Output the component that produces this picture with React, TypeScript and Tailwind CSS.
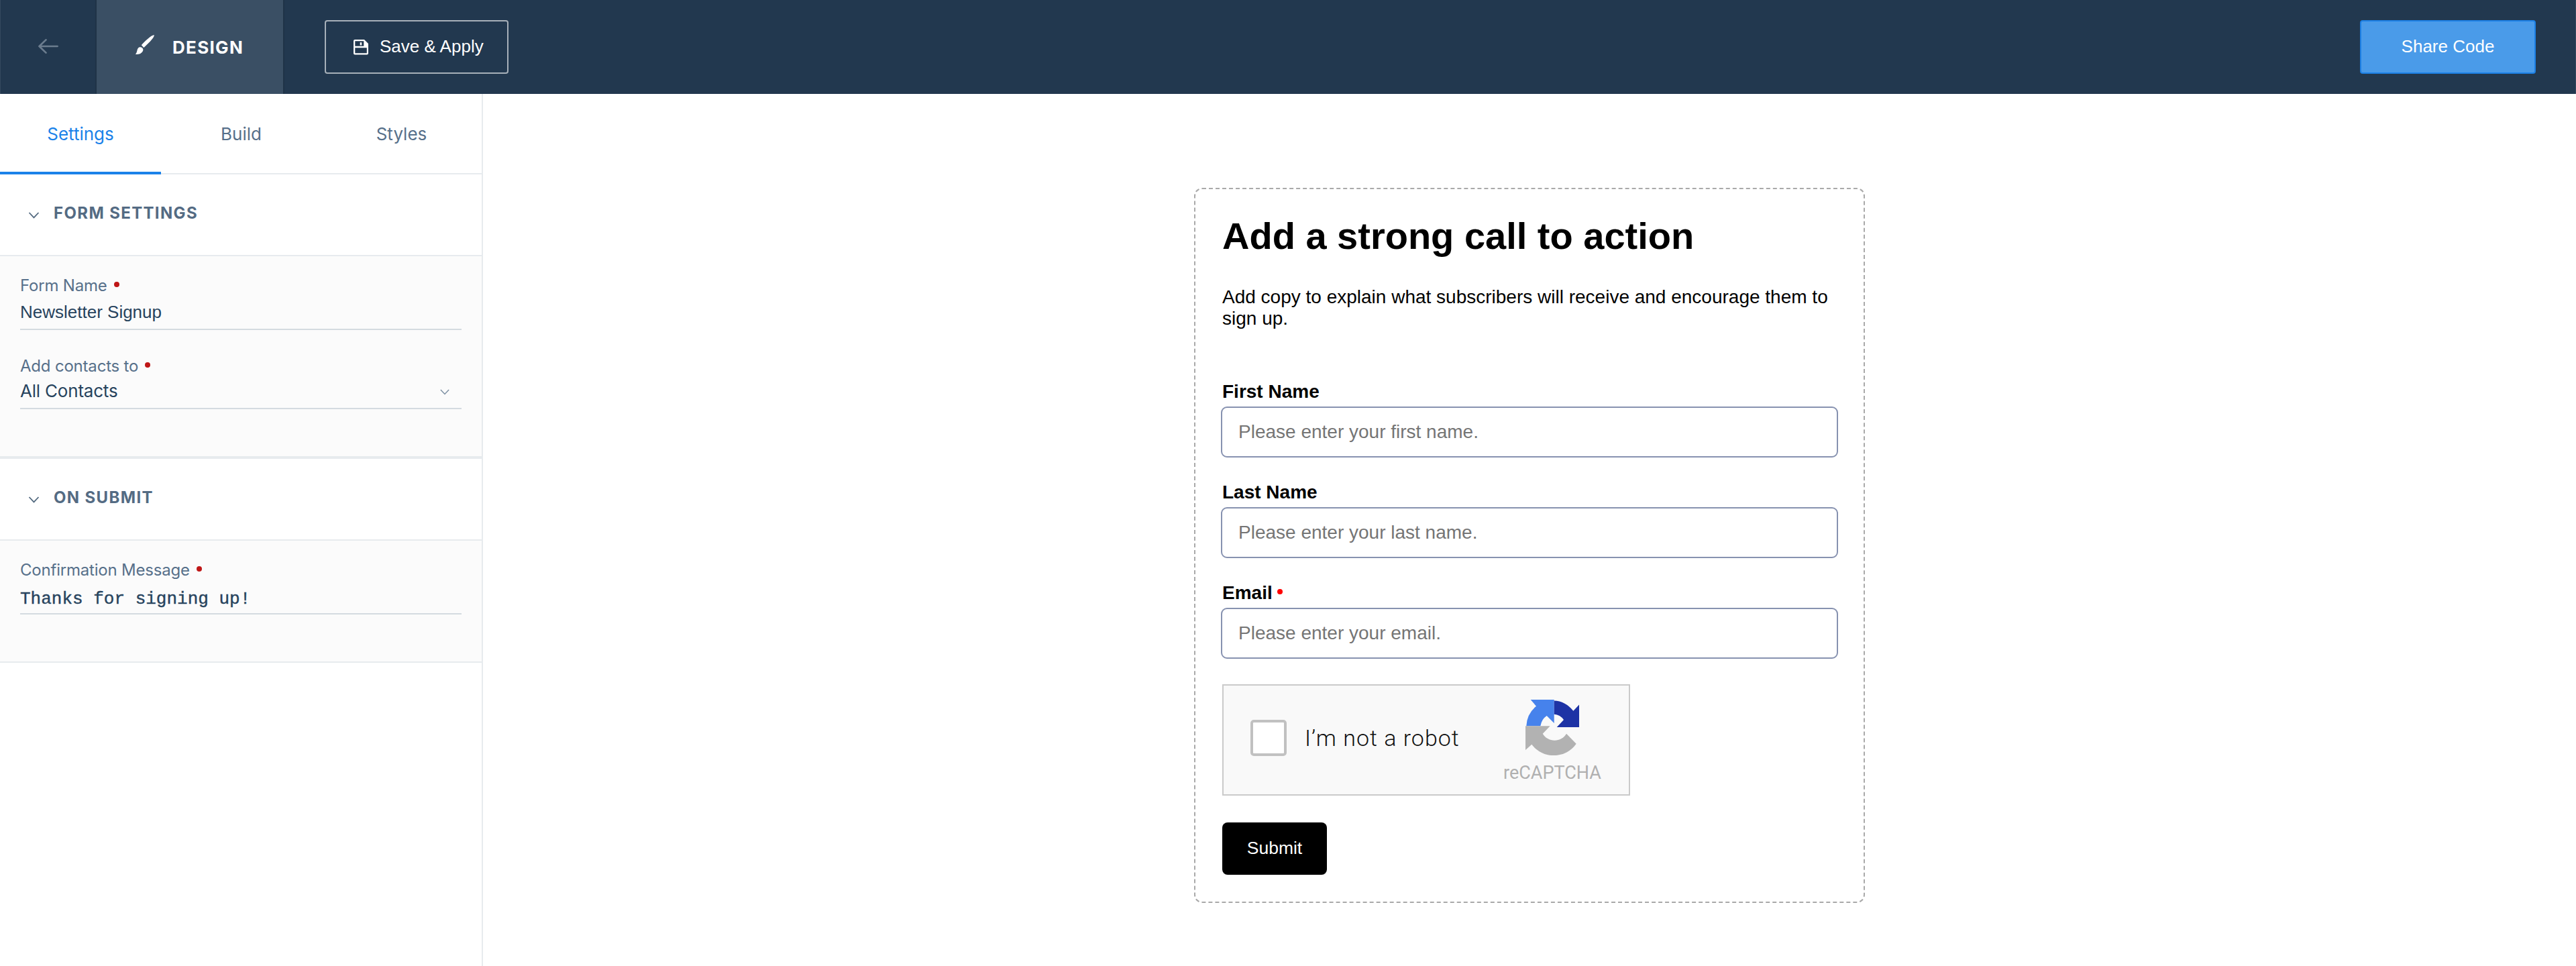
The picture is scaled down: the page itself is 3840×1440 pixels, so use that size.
import React from "react";

const helv = "font-['Liberation_Sans',Arial,sans-serif]";

function Chevron({ className, color }: { className: string; color: string }) {
  return (
    <svg viewBox="0 0 16 10" className={className} fill="none" stroke={color} strokeWidth="1.8">
      <path d="M1 1l7 7.4L15 1" />
    </svg>
  );
}

function FieldLabel({ children }: { children: string }) {
  return (
    <div className="flex items-center gap-[10px] text-[24px] leading-[28px] tracking-[-0.2px] whitespace-nowrap text-[#57708a]">
      <span>{children}</span>
      <span className="mb-[5px] size-[8px] rounded-full bg-[#bf1717]" />
    </div>
  );
}

function SectionHeader({ children }: { children: string }) {
  return (
    <div className="flex h-[122px] border-b-2 border-[#e7ebee] bg-white pl-[42px]">
      <Chevron className="mt-[56px] h-[10px] w-[17px]" color="#52697f" />
      <h2 className="mt-[42px] ml-[21px] text-[24px] leading-[32px] font-bold tracking-[1.35px] whitespace-nowrap text-[#546b83]">
        {children}
      </h2>
    </div>
  );
}

function FormField({ label, placeholder, required }: { label: string; placeholder: string; required?: boolean }) {
  return (
    <div className="h-[150px]">
      <div className="flex h-[38px] items-start pl-[2px] text-[28px] leading-[32px] font-bold whitespace-nowrap text-black">
        <span>{label}</span>
        {required && <span className="mt-[10px] ml-[7px] size-[8px] rounded-full bg-[#ff0000]" />}
      </div>
      <div className="flex h-[76px] w-[920px] items-center rounded-[9px] border-2 border-[#8792b0] pl-[24px] text-[28px] text-[#757575]">
        {placeholder}
      </div>
    </div>
  );
}

export default function App() {
  return (
    <div className="h-[1440px] w-[3840px] overflow-hidden bg-white font-['Inter',sans-serif]">
      <header className="flex h-[140px] items-center border-x border-[#34495e] bg-[#22384f] text-white">
        <div className="flex h-full w-[143px] items-center justify-center border-r-2 border-[#1f3347]">
          <svg viewBox="0 0 30 22" className="mb-[2px] h-[22px] w-[30px]" fill="none" stroke="#6b7c8e" strokeWidth="2.7" strokeLinecap="round" strokeLinejoin="round">
            <path d="M28.600 11H1.500M11.500 1.400L1.500 11l10 9.600" />
          </svg>
        </div>
        <div className="flex h-full w-[280px] border-r-2 border-[#1f3347] bg-[#3a4f64] pl-[58px]">
          <svg viewBox="0 0 28 30" className="mt-[52px] h-[30px] w-[28px]" fill="#fff">
            <path d="M27.800.4C24.500-.5 14 9.500 8.800 15.300l3.500 3.700C18 14 28.600 3.600 27.800.4zM7.600 18.200C4.600 17.800 3 20 2.500 23 2.100 25.500 1 27.500 0 29c4 .2 9.600-.5 11.300-6 .4-2.200-.8-4.400-3.700-4.800z" />
          </svg>
          <span className="mt-[55px] ml-[27px] text-[26px] leading-[32px] font-bold tracking-[1.3px]">DESIGN</span>
        </div>
        <div className={`ml-[60px] flex h-[80px] w-[274px] items-center rounded-[4px] border-2 border-[#a7b0b9] pl-[41px] ${helv}`}>
          <svg viewBox="0 0 22 22.500" className="mt-px h-[22.5px] w-[22px]" fill="#fff" fillRule="evenodd">
            <path d="M2 0H16L22 6V20.500a2 2 0 0 1-2 2H2a2 2 0 0 1-2-2V2a2 2 0 0 1 2-2zM2.300 2.300V9.700H15.300V2.300zM2.300 12.300V20.200H19.800V12.300z" />
            <path d="M9.700 4.200h2.500v4.200H9.700z" />
          </svg>
          <span className="mb-[2px] ml-[17px] text-[26px] whitespace-nowrap">Save &amp; Apply</span>
        </div>
        <div className={`mr-[59px] ml-auto flex h-[80px] w-[262px] items-center justify-center rounded-[4px] border-2 border-[#1c80e6] bg-[#4a9be9] ${helv}`}>
          <span className="mb-[2px] text-[26px]">Share Code</span>
        </div>
      </header>
      <main className="flex h-[1300px]">
        <aside className="w-[720px] border-r-2 border-[#e7ebee]">
          <nav className="flex h-[120px] border-b-2 border-[#e7ebee] text-[26px] leading-[38px] text-[#57708a]">
            <span className="-mb-[2px] flex w-[240px] justify-center border-b-4 border-[#1b82e9] pt-[41px] text-[#1b82e9]">Settings</span>
            <span className="w-[239px] pt-[41px] text-center">Build</span>
            <span className="w-[239px] pt-[41px] text-center">Styles</span>
          </nav>
          <SectionHeader>FORM SETTINGS</SectionHeader>
          <div className="h-[302px] border-b-4 border-[#e7ebee] bg-[#fbfbfb] px-[30px] pt-[30px]">
            <FieldLabel>Form Name</FieldLabel>
            <div className={`h-[52px] border-b-2 border-[#d4dbe0] pt-[9px] text-[26px] leading-[32px] text-[#27435d] ${helv}`}>Newsletter Signup</div>
            <div className="pt-[40px]">
              <FieldLabel>Add contacts to</FieldLabel>
            </div>
            <div className="flex h-[50px] justify-between border-b-2 border-[#d4dbe0] pt-[7px] pr-[18px] text-[26px] leading-[32px] tracking-[-0.2px] text-[#27435d]">
              <span>All Contacts</span>
              <Chevron className="mt-[13px] h-[9px] w-[14px]" color="#8093a5" />
            </div>
          </div>
          <SectionHeader>ON SUBMIT</SectionHeader>
          <div className="h-[182px] border-b-2 border-[#e7ebee] bg-[#fbfbfb] px-[30px] pt-[30px]">
            <FieldLabel>Confirmation Message</FieldLabel>
            <div className="h-[52px] border-b-2 border-[#d4dbe0] pt-[13px] font-['Liberation_Mono','Courier_New',monospace] text-[26px] leading-[32px] text-[#27435d] [-webkit-text-stroke:0.4px_#27435d]">
              Thanks for signing up!
            </div>
          </div>
        </aside>
        <section className="flex flex-1 justify-center pt-[140px]">
          <div className={`h-[1066px] w-[1000px] rounded-[12px] border-2 border-dashed border-[#a9a9a9] px-[38px] text-black ${helv}`}>
            <h1 className="mt-[38px] pl-[2px] text-[56px] leading-[64px] font-bold">Add a strong call to action</h1>
            <p className="mt-[43px] pl-[2px] text-[28px] leading-[32px]">
              Add copy to explain what subscribers will receive and encourage them to
              <br />
              sign up.
            </p>
            <div className="mt-[77px]">
              <FormField label="First Name" placeholder="Please enter your first name." />
              <FormField label="Last Name" placeholder="Please enter your last name." />
              <FormField label="Email" placeholder="Please enter your email." required />
            </div>
            <div className="mt-[2px] ml-[2px] flex h-[166px] w-[608px] border-2 border-[#cacaca] bg-[#f9f9f9] font-['Roboto',sans-serif]">
              <span className="mt-[51px] ml-[40px] size-[54px] rounded-[5px] border-[4.5px] border-[#c1c1c1] bg-white" />
              <span className="mt-[56px] ml-[27px] text-[34px] leading-[44px] font-light tracking-[1px] whitespace-nowrap text-[#111]">I’m not a robot</span>
              <div className="mt-[21px] ml-auto mr-[41px] flex w-[146px] flex-col items-center">
                <svg viewBox="0 0 80 82.500" className="ml-[-1px] h-[82.5px] w-[80px]">
                  <path d="M7.700 0H42.700V35L31.700 24Q24 29 22.300 39.300H1.300Q2 21 16 9.700z" fill="#4682ec" />
                  <path d="M42.700 1.600Q59 2 71.300 16.700L80 7.500V41H46.700L57 30Q51.500 22 42.700 21.700z" fill="#1e33a5" />
                  <path d="M0 39.300H36.700L25.700 50.700A20.500 20.500 0 0 0 61 50.700L75.700 65.700A41 41 0 0 1 9.300 66.700L0 75z" fill="#b2b2b2" />
                </svg>
                <span className="mt-[8px] text-[27px] leading-[36px] text-[#b0b0b0]">reCAPTCHA</span>
              </div>
            </div>
            <div className="mt-[40px] ml-[2px] flex h-[78px] w-[156px] items-center justify-center rounded-[8px] bg-black text-[26.5px] text-white">Submit</div>
          </div>
        </section>
      </main>
    </div>
  );
}
